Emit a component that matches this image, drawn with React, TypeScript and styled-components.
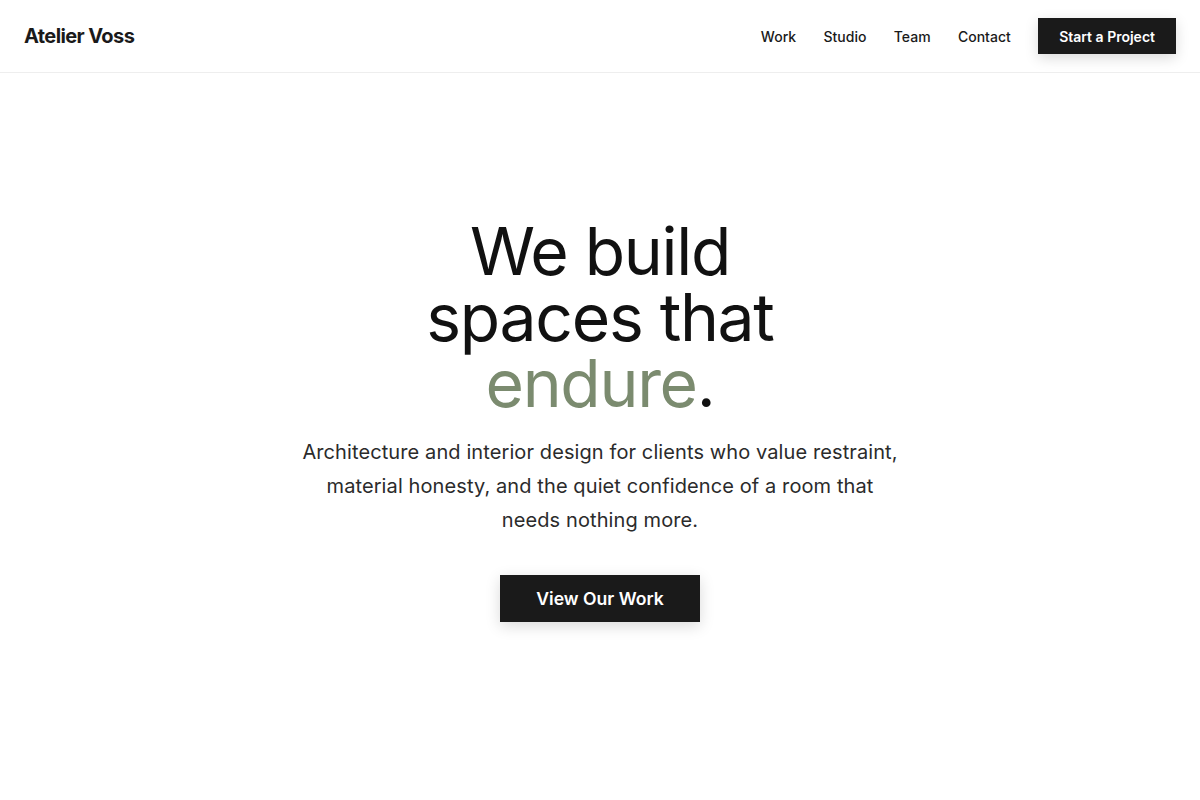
import React from "react";
import styled, { createGlobalStyle } from "styled-components";

const GlobalStyle = createGlobalStyle`
  * {
    box-sizing: border-box;
  }
  body {
    margin: 0;
    background: #ffffff;
    color: #111111;
    font-family: Inter, "Noto Sans", Arial, sans-serif;
    -webkit-font-smoothing: antialiased;
  }
`;

const Page = styled.div`
  min-height: 100vh;
  display: flex;
  flex-direction: column;
`;

const Header = styled.header`
  height: 73px;
  display: flex;
  align-items: center;
  justify-content: space-between;
  padding: 0 24px;
  border-bottom: 1px solid #eeeeee;
`;

const Logo = styled.a`
  font-size: 20px;
  font-weight: 700;
  letter-spacing: -0.03em;
  color: #1a1a1a;
  text-decoration: none;
`;

const Nav = styled.nav`
  display: flex;
  align-items: center;
  gap: 27.4px;
`;

const NavLink = styled.a`
  font-size: 14px;
  font-weight: 450;
  color: #1a1a1a;
  text-decoration: none;
`;

const Button = styled.a<{ $size?: "sm" | "lg" }>`
  display: inline-flex;
  align-items: center;
  justify-content: center;
  background: #1a1a1a;
  color: #ffffff;
  text-decoration: none;
  font-weight: 600;
  box-shadow: 0 4px 14px rgba(0, 0, 0, 0.15);
  font-size: ${(p) => (p.$size === "lg" ? "17.6px" : "14px")};
  height: ${(p) => (p.$size === "lg" ? "47px" : "36px")};
  padding: ${(p) => (p.$size === "lg" ? "0 36.5px" : "0 21px")};
`;

const Hero = styled.main`
  flex: 1;
  display: flex;
  flex-direction: column;
  align-items: center;
  justify-content: center;
  text-align: center;
  padding: 0 24px 34px;
`;

const Headline = styled.h1`
  margin: 0;
  max-width: 420px;
  font-size: 66px;
  font-weight: 400;
  line-height: 1;
  letter-spacing: -0.02em;
  color: #111111;
`;

const Accent = styled.span`
  color: #7b8b6f;
`;

const Lead = styled.p`
  margin: 19px 0 38px;
  max-width: 600px;
  font-size: 20px;
  line-height: 1.7;
  letter-spacing: 0.005em;
  color: #2b2b2b;
`;

export default function App() {
  return (
    <Page>
      <GlobalStyle />
      <Header>
        <Logo href="#">Atelier Voss</Logo>
        <Nav>
          <NavLink href="#">Work</NavLink>
          <NavLink href="#">Studio</NavLink>
          <NavLink href="#">Team</NavLink>
          <NavLink href="#">Contact</NavLink>
          <Button href="#" $size="sm">
            Start a Project
          </Button>
        </Nav>
      </Header>
      <Hero>
        <Headline>
          We build spaces that <Accent>endure</Accent>.
        </Headline>
        <Lead>
          Architecture and interior design for clients who value restraint,
          material honesty, and the quiet confidence of a room that needs
          nothing more.
        </Lead>
        <Button href="#" $size="lg">
          View Our Work
        </Button>
      </Hero>
    </Page>
  );
}
